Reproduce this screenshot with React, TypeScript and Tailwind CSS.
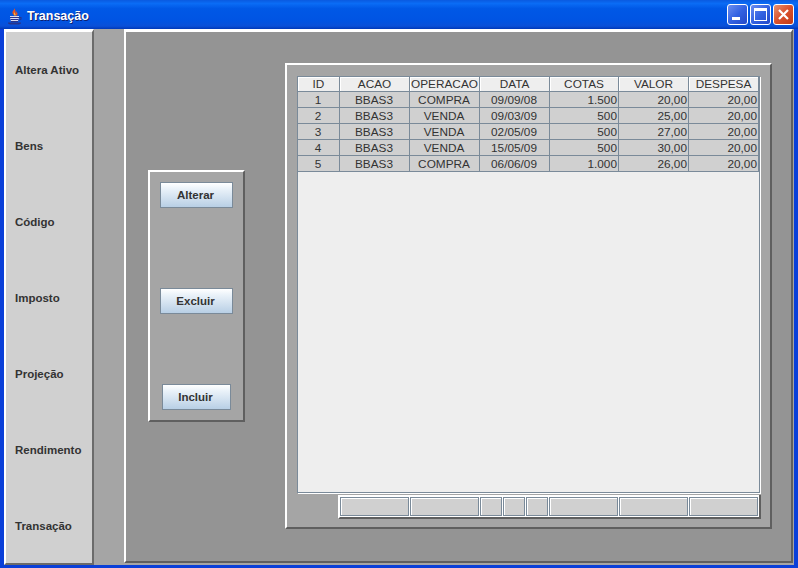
const menuItems = ["Altera Ativo", "Bens", "Código", "Imposto", "Projeção", "Rendimento", "Transação"];

const columns = [
  { label: "ID", width: "w-[42px]", align: "text-center" },
  { label: "ACAO", width: "w-[70px]", align: "text-center" },
  { label: "OPERACAO", width: "w-[70px]", align: "text-center" },
  { label: "DATA", width: "w-[70px]", align: "text-center" },
  { label: "COTAS", width: "w-[69px]", align: "text-right" },
  { label: "VALOR", width: "w-[70px]", align: "text-right" },
  { label: "DESPESA", width: "w-[70px]", align: "text-right" },
];

const rows = [
  ["1", "BBAS3", "COMPRA", "09/09/08", "1.500", "20,00", "20,00"],
  ["2", "BBAS3", "VENDA", "09/03/09", "500", "25,00", "20,00"],
  ["3", "BBAS3", "VENDA", "02/05/09", "500", "27,00", "20,00"],
  ["4", "BBAS3", "VENDA", "15/05/09", "500", "30,00", "20,00"],
  ["5", "BBAS3", "COMPRA", "06/06/09", "1.000", "26,00", "20,00"],
];

const footerCells = ["w-[69px]", "w-[69px]", "w-[22px]", "w-[22px]", "w-[22px]", "w-[69px]", "w-[69px]", "w-[69px]"];

function JavaIcon() {
  return (
    <svg width="16" height="17" viewBox="0 0 16 17" className="mt-[3px] shrink-0">
      <path d="M7 0c1 2-2 3-1.500 5 .2 1 1 1.500 1.500 2.500h3c1-1.500.5-3-1-4.500.5 1.500 0 2.500-.5 3C9 4 8.500 2 7 0Z" fill="#e8541e" />
      <path d="M7 4c.5 1-.5 2 .5 3.500h1C9 6.500 8 5.500 7 4Z" fill="#f8c040" />
      <path d="M3 8h9v1.500l-1 4H4l-1-4Z" fill="#d8dcf4" />
      <path d="M3 9h9v1H3zM3.500 11h8v1h-8zM4 13h7v1H4zM12 9h2.500v2.500L11.500 13v-1l2-1v-1H12zM1 14.500h13v1l-2 1H3l-2-1Z" fill="#28348c" />
    </svg>
  );
}

function CaptionButton({ kind }: { kind: "min" | "max" | "close" }) {
  const tone =
    kind === "close"
      ? "bg-[linear-gradient(135deg,#e8926f,#d9502c_50%,#c23a16)]"
      : "bg-[linear-gradient(135deg,#6c8ef0,#3362e2_50%,#2348c8)]";
  return (
    <div className={`flex h-[21px] w-[21px] items-center justify-center rounded-[3px] border border-white ${tone}`}>
      {kind === "min" && <div className="mt-[8px] mr-[4px] h-[3px] w-[8px] bg-white" />}
      {kind === "max" && <div className="h-[13px] w-[13px] border border-t-[3px] border-white" />}
      {kind === "close" && (
        <svg width="13" height="13" viewBox="0 0 13 13">
          <path d="M2 2l9 9M11 2l-9 9" stroke="#fff" strokeWidth="2.200" />
        </svg>
      )}
    </div>
  );
}

function ActionButton({ label, width, className }: { label: string; width: string; className: string }) {
  return (
    <button
      type="button"
      className={`h-[26px] border border-[#7a8a99] bg-[linear-gradient(#ffffff,#eaf2f9_25%,#b8cfe5)] pt-px pr-[2px] text-[11.500px] font-bold text-[#333333] ${width} ${className}`}
    >
      {label}
    </button>
  );
}

export default function App() {
  return (
    <div className="flex h-[568px] w-[798px] flex-col overflow-hidden bg-[#0a3fd8] font-['Liberation_Sans',Arial,sans-serif]">
      <header className="flex h-[29px] shrink-0 items-center bg-[linear-gradient(#0a5ae0,#0a6cf5_12%,#0058e6_30%,#0054e3_70%,#0a50d8_90%,#0038b8)] pr-[4px] pl-[7px]">
        <JavaIcon />
        <span className="mt-[4px] ml-[4px] flex-1 text-[12.500px] font-bold text-white [text-shadow:1px_1px_0_#0f1f70]">Transação</span>
        <div className="flex gap-[2px]">
          <CaptionButton kind="min" />
          <CaptionButton kind="max" />
          <CaptionButton kind="close" />
        </div>
      </header>

      <div className="mx-[4px] mb-[3px] flex min-h-0 flex-1 bg-[#a5a5a5]">
        <nav className="flex w-[90px] shrink-0 flex-col overflow-hidden border-2 border-t-[3px] border-white border-r-[#6b6b6b] border-b-[#6b6b6b] bg-[#d0d0d0]">
          {menuItems.map((item) => (
            <div key={item} className="flex h-[76px] shrink-0 items-center pt-[2px] pl-[9px] text-[11.500px] font-bold text-[#333333]">
              {item}
            </div>
          ))}
        </nav>

        <main className="mr-px mb-[2px] ml-[30px] flex min-w-0 flex-1 items-start border-2 border-t-[3px] border-white border-r-[#5f5f5f] border-b-[#5f5f5f] bg-[#949494] pt-[31px] pl-[22px]">
          <div className="mt-[107px] flex h-[252px] w-[97px] shrink-0 flex-col items-center border-2 border-white border-r-[#5f5f5f] border-b-[#5f5f5f] bg-[#a5a5a5]">
            <ActionButton label="Alterar" width="w-[73px]" className="mt-[10px]" />
            <ActionButton label="Excluir" width="w-[73px]" className="mt-[80px]" />
            <ActionButton label="Incluir" width="w-[69px]" className="mt-[70px]" />
          </div>

          <section className="ml-[40px] flex h-[466px] w-[487px] shrink-0 flex-col border-2 border-white border-r-[#5f5f5f] border-b-[#5f5f5f] bg-[#a5a5a5] pt-[11px] pl-[10px]">
            <div className="h-[417px] w-[463px] border border-t-0 border-[#7a8a99] bg-[#eeeeee] shadow-[1px_1px_0_#ffffff]">
              <div className="flex h-[16px] border-t border-[#7a8a99]">
                {columns.map((col) => (
                  <div
                    key={col.label}
                    className={`${col.width} border-r border-b border-[#7a8a99] bg-[#eeeeee] text-center text-[11.800px] leading-[15px] text-[#333333] shadow-[inset_1px_1px_0_#ffffff]`}
                  >
                    {col.label}
                  </div>
                ))}
              </div>
              {rows.map((row) => (
                <div key={row[0]} className="flex h-[16px]">
                  {row.map((value, i) => (
                    <div
                      key={i}
                      className={`${columns[i].width} ${columns[i].align} border-r border-b border-[#7a8a99] bg-[#d0d0d0] pr-px text-[11.800px] leading-[17px] text-[#333333]`}
                    >
                      {value}
                    </div>
                  ))}
                </div>
              ))}
            </div>

            <div className="mt-[2px] ml-[41px] flex h-[24px] w-[423px] gap-px border-r-2 border-b-2 border-l-2 border-white border-r-[#5f5f5f] border-b-[#5f5f5f] bg-white pt-[2px] pr-px pb-px">
              {footerCells.map((width, i) => (
                <div key={i} className={`${width} h-full border border-[#7a8a99] bg-[#d0d0d0] shadow-[inset_1px_1px_0_#ffffff]`} />
              ))}
            </div>
          </section>
        </main>
      </div>
    </div>
  );
}
